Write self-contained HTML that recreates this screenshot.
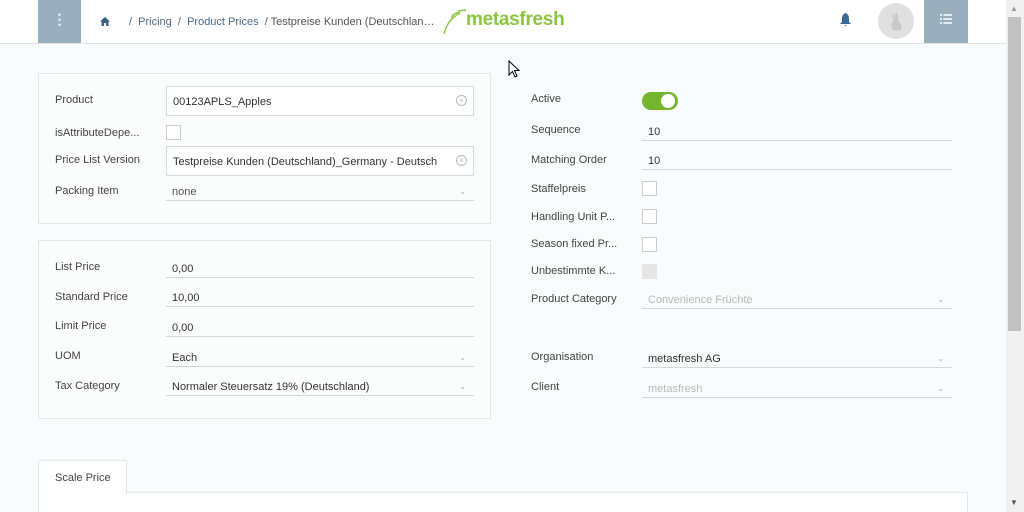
<!DOCTYPE html>
<html><head><meta charset="utf-8"><style>
*{box-sizing:border-box;margin:0;padding:0}
body{width:1024px;height:512px;overflow:hidden;background:#f9fcfc;font-family:"Liberation Sans",sans-serif;font-size:11px;color:#333;position:relative}
.a{position:absolute}
.hdr{left:0;top:0;width:1006px;height:44px;background:#fff;border-bottom:1px solid #dfe3e6}
.lbl{position:absolute;color:#444;font-size:11px;margin-top:2px}
.inp{position:absolute;height:19px;border-bottom:1px solid #d6d9db;font-size:11px;padding:4px 6px 0;color:#333}
.box{position:absolute;height:30px;border:1px solid #d6d9db;background:#fff;font-size:11px;padding:9px 6px 0;color:#333}
.x{position:absolute;right:6px;top:8px;width:11px;height:11px;border:1px solid #bbb;border-radius:50%;color:#bbb;font-size:8px;line-height:9px;text-align:center}
.cb{position:absolute;width:15px;height:15px;border:1px solid #ccc;background:#fff}
.car{position:absolute;right:8px;top:5px;color:#aaa;font-size:8px}
.panel{position:absolute;border:1px solid #e2e6e8;background:#fbfdfd}
</style></head><body>
<div class="a hdr"></div>
<div class="a" style="left:38px;top:0;width:43px;height:43px;background:#9aafbd;color:#fff;font-size:14px;text-align:center;line-height:38px;font-weight:bold">⋮</div>
<svg class="a" style="left:100px;top:17px" width="10" height="9" viewBox="0 0 10 9"><path d="M5 0L0 4.5H1.5V9H4V6H6V9H8.5V4.5H10Z" fill="#3a5f80"/></svg>
<div class="a" style="left:129px;top:16px;color:#4a6a85;font-size:11px">/&nbsp; Pricing &nbsp;/&nbsp; Product Prices &nbsp;<span style="color:#555">/ Testpreise Kunden (Deutschlan…</span></div>
<svg class="a" style="left:442px;top:9px" width="25" height="26" viewBox="0 0 25 26"><path d="M2 25C4 17 8 9 18 4M10 10C9 6 14 3 18 4M16 2L24 1" stroke="#8cc63f" stroke-width="1.5" fill="none"/></svg>
<div class="a" style="left:466px;top:9px;color:#8cc63f;font-size:19px;font-weight:bold;letter-spacing:-0.3px">metasfresh</div>
<svg class="a" style="left:840px;top:13px" width="11" height="13" viewBox="0 0 11 13"><path d="M5.5 0C3 1 2 3 2 6V9L0 11H11L9 9V6C9 3 8 1 5.5 0ZM4 12H7L5.5 13Z" fill="#3a6a95"/></svg>
<div class="a" style="left:878px;top:3px;width:36px;height:36px;border-radius:50%;background:#e0e0e0"></div>
<svg class="a" style="left:888px;top:10px" width="16" height="22" viewBox="0 0 16 22"><path d="M5 2C4 5 4 8 6 10C3 12 3 18 5 20H13C14 17 13 13 10 11C11 8 10 4 8 2C7 5 7 7 7 9C6 7 6 4 5 2Z" fill="#c9c9c9"/></svg>
<div class="a" style="left:924px;top:0;width:44px;height:43px;background:#9aafbd"></div>
<svg class="a" style="left:940px;top:14px" width="12" height="10" viewBox="0 0 12 10"><path d="M0 1h2M0 5h2M0 9h2M3.5 1h8.5M3.5 5h8.5M3.5 9h8.5" stroke="#fff" stroke-width="1.4"/></svg>
<div class="a" style="left:1006px;top:0;width:18px;height:512px;background:#f1f1f1"></div>
<div class="a" style="left:1008px;top:17px;width:13px;height:314px;background:#c1c1c1"></div>
<div class="a" style="left:1010px;top:4px;color:#999;font-size:8px">▲</div>
<div class="a" style="left:1010px;top:498px;color:#555;font-size:8px">▼</div>

<div class="panel" style="left:38px;top:73px;width:453px;height:151px"></div>
<div class="lbl" style="left:55px;top:92px">Product</div>
<div class="box" style="left:166px;top:86px;width:308px">00123APLS_Apples<div class="x">×</div></div>
<div class="lbl" style="left:55px;top:125px">isAttributeDepe...</div>
<div class="cb" style="left:166px;top:125px"></div>
<div class="lbl" style="left:55px;top:152px">Price List Version</div>
<div class="box" style="left:166px;top:146px;width:308px">Testpreise Kunden (Deutschland)_Germany - Deutsch<div class="x">×</div></div>
<div class="lbl" style="left:55px;top:183px">Packing Item</div>
<div class="inp" style="left:166px;top:182px;width:308px;color:#555">none<span class="car">⌄</span></div>

<div class="panel" style="left:38px;top:240px;width:453px;height:179px"></div>
<div class="lbl" style="left:55px;top:259px">List Price</div>
<div class="inp" style="left:166px;top:259px;width:308px">0,00</div>
<div class="lbl" style="left:55px;top:289px">Standard Price</div>
<div class="inp" style="left:166px;top:288px;width:308px">10,00</div>
<div class="lbl" style="left:55px;top:318px">Limit Price</div>
<div class="inp" style="left:166px;top:318px;width:308px">0,00</div>
<div class="lbl" style="left:55px;top:348px">UOM</div>
<div class="inp" style="left:166px;top:348px;width:308px">Each<span class="car">⌄</span></div>
<div class="lbl" style="left:55px;top:378px">Tax Category</div>
<div class="inp" style="left:166px;top:377px;width:308px">Normaler Steuersatz 19% (Deutschland)<span class="car">⌄</span></div>

<div class="lbl" style="left:531px;top:91px">Active</div>
<div class="a" style="left:642px;top:92px;width:36px;height:18px;border-radius:9px;background:#74b72e"></div>
<div class="a" style="left:661px;top:94px;width:14px;height:14px;border-radius:50%;background:#fff"></div>
<div class="lbl" style="left:531px;top:122px">Sequence</div>
<div class="inp" style="left:642px;top:122px;width:310px">10</div>
<div class="lbl" style="left:531px;top:152px">Matching Order</div>
<div class="inp" style="left:642px;top:151px;width:310px">10</div>
<div class="lbl" style="left:531px;top:181px">Staffelpreis</div>
<div class="cb" style="left:642px;top:181px"></div>
<div class="lbl" style="left:531px;top:209px">Handling Unit P...</div>
<div class="cb" style="left:642px;top:209px"></div>
<div class="lbl" style="left:531px;top:236px">Season fixed Pr...</div>
<div class="cb" style="left:642px;top:237px"></div>
<div class="lbl" style="left:531px;top:263px">Unbestimmte K...</div>
<div class="cb" style="left:642px;top:264px;background:#e6e6e6;border-color:#e6e6e6"></div>
<div class="lbl" style="left:531px;top:291px">Product Category</div>
<div class="inp" style="left:642px;top:290px;width:310px;color:#bbb">Convenience Früchte<span class="car">⌄</span></div>
<div class="lbl" style="left:531px;top:349px">Organisation</div>
<div class="inp" style="left:642px;top:349px;width:310px">metasfresh AG<span class="car">⌄</span></div>
<div class="lbl" style="left:531px;top:379px">Client</div>
<div class="inp" style="left:642px;top:379px;width:310px;color:#bbb">metasfresh<span class="car">⌄</span></div>

<div class="a" style="left:38px;top:492px;width:930px;height:20px;background:#fff;border:1px solid #e2e6e8;border-bottom:none"></div>
<div class="a" style="left:38px;top:460px;width:89px;height:34px;background:#fff;border:1px solid #e2e6e8;border-bottom:none;font-size:11px;padding:11px 0 0 16px;color:#444">Scale Price</div>
<svg class="a" style="left:508px;top:60px" width="12" height="18" viewBox="0 0 12 18"><path d="M1 1V15L4.5 11.5L7 17L9 16L6.5 10.5H11Z" fill="#fff" stroke="#000" stroke-width="1"/></svg>
</body></html>
